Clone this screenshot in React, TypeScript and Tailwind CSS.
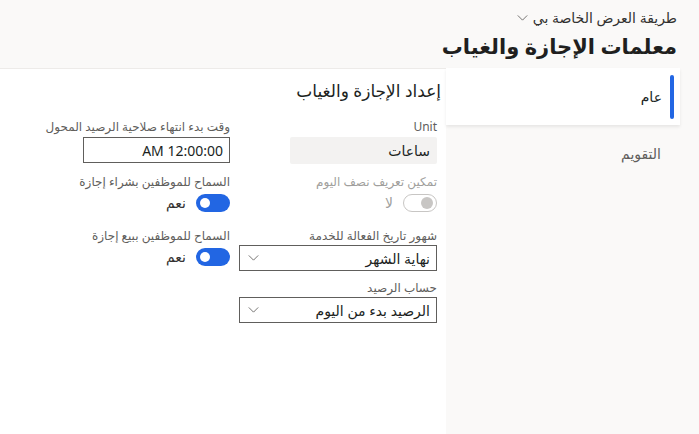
import React from 'react';

const Chevron = ({ className }: { className?: string }) => (
  <svg viewBox="0 0 12 7" className={className} fill="none" stroke="currentColor" strokeWidth="1">
    <path d="M0.5 0.5 L6 6 L11.5 0.5" />
  </svg>
);

const Label = ({ text, disabled }: { text: string; disabled?: boolean }) => (
  <div
    className={`h-[16px] leading-[16px] text-[12px] whitespace-nowrap ${
      disabled ? 'text-[#a19f9d]' : 'text-[#605e5c]'
    }`}
  >
    {text}
  </div>
);

const Toggle = ({ on, disabled, text }: { on: boolean; disabled?: boolean; text: string }) => (
  <div className="flex items-center gap-[10px] h-[19px]">
    <div
      className={`w-[34px] h-[18px] rounded-full flex items-center ${
        on
          ? 'bg-[#2266e3] justify-end px-[4px]'
          : 'border border-[#c8c6c4] bg-white justify-start px-[3px]'
      }`}
    >
      <div
        className={`rounded-full ${on ? 'w-[10px] h-[10px] bg-white' : 'w-[12px] h-[12px] bg-[#c8c6c4]'}`}
      />
    </div>
    <span className={`text-[14px] ${disabled ? 'text-[#a19f9d]' : 'text-[#323130]'}`}>{text}</span>
  </div>
);

const Dropdown = ({ value }: { value: string }) => (
  <div className="w-[198px] h-[26px] border border-[#605e5c] flex items-center justify-between pr-[6px] pl-[8px] text-[14px] text-[#201f1e]">
    <span>{value}</span>
    <Chevron className="w-[11px] h-[6px] text-[#605e5c]" />
  </div>
);

export default function App() {
  return (
    <div
      dir="rtl"
      className="w-[699px] h-[434px] overflow-hidden bg-white text-[#201f1e]"
      style={{ fontFamily: '"Noto Sans", "DejaVu Sans", sans-serif' }}
    >
      <header className="h-[68px] bg-[#faf9f8] pr-[22px] pt-[8px]">
        <div className="flex items-center gap-[5px] text-[14px] leading-[20px] text-[#323130]">
          <span>طريقة العرض الخاصة بي</span>
          <Chevron className="w-[11px] h-[6px] text-[#605e5c]" />
        </div>
        <h1 className="text-[21px] font-semibold leading-[32px] mt-[2px] text-[#201f1e]">معلمات الإجازة والغياب</h1>
      </header>

      <div className="flex h-[366px]">
        <nav className="w-[253px] bg-[#faf9f8] pr-[19px]">
          <div className="h-[57px] bg-white shadow-[0_2px_3px_rgba(0,0,0,0.08)] flex items-center pr-[6px]">
            <div className="w-[4px] h-[44px] rounded-full bg-[#2266e3]" />
            <span className="mr-[8px] text-[14px] text-[#201f1e]">عام</span>
          </div>
          <div className="h-[57px] flex items-center pr-[19px] text-[14px] text-[#605e5c]">التقويم</div>
        </nav>

        <main className="flex-1 pt-[10px] border-t border-[#edebe9]">
          <h2 className="pr-[5px] text-[17px] leading-[24px] font-medium text-[#201f1e]">إعداد الإجازة والغياب</h2>

          <div className="flex gap-[9px] pr-[9px] mt-[16px]">
            <div className="w-[198px] flex flex-col">
              <div className="h-[55px]">
                <Label text="Unit" />
                <div className="mt-[2px] w-[147px] h-[27px] bg-[#f3f2f1] rounded-[2px] flex items-center pr-[7px] text-[14px]">
                  ساعات
                </div>
              </div>
              <div className="h-[54px]">
                <Label text="تمكين تعريف نصف اليوم" disabled />
                <div className="mt-[3px]">
                  <Toggle on={false} disabled text="لا" />
                </div>
              </div>
              <div className="h-[52px]">
                <Label text="شهور تاريخ الفعالة للخدمة" />
                <div className="mt-[1px]">
                  <Dropdown value="نهاية الشهر" />
                </div>
              </div>
              <div>
                <Label text="حساب الرصيد" />
                <div className="mt-[1px]">
                  <Dropdown value="الرصيد بدء من اليوم" />
                </div>
              </div>
            </div>

            <div className="w-[147px] flex flex-col">
              <div className="h-[55px]">
                <Label text="وقت بدء انتهاء صلاحية الرصيد المحول" />
                <div className="mt-[2px] w-[147px] h-[26px] border border-[#605e5c] flex items-center pr-[6px] text-[14px]">
                  12:00:00 AM
                </div>
              </div>
              <div className="h-[54px]">
                <Label text="السماح للموظفين بشراء إجازة" />
                <div className="mt-[3px]">
                  <Toggle on text="نعم" />
                </div>
              </div>
              <div className="h-[52px]">
                <Label text="السماح للموظفين ببيع إجازة" />
                <div className="mt-[3px]">
                  <Toggle on text="نعم" />
                </div>
              </div>
            </div>
          </div>
        </main>
      </div>
    </div>
  );
}
